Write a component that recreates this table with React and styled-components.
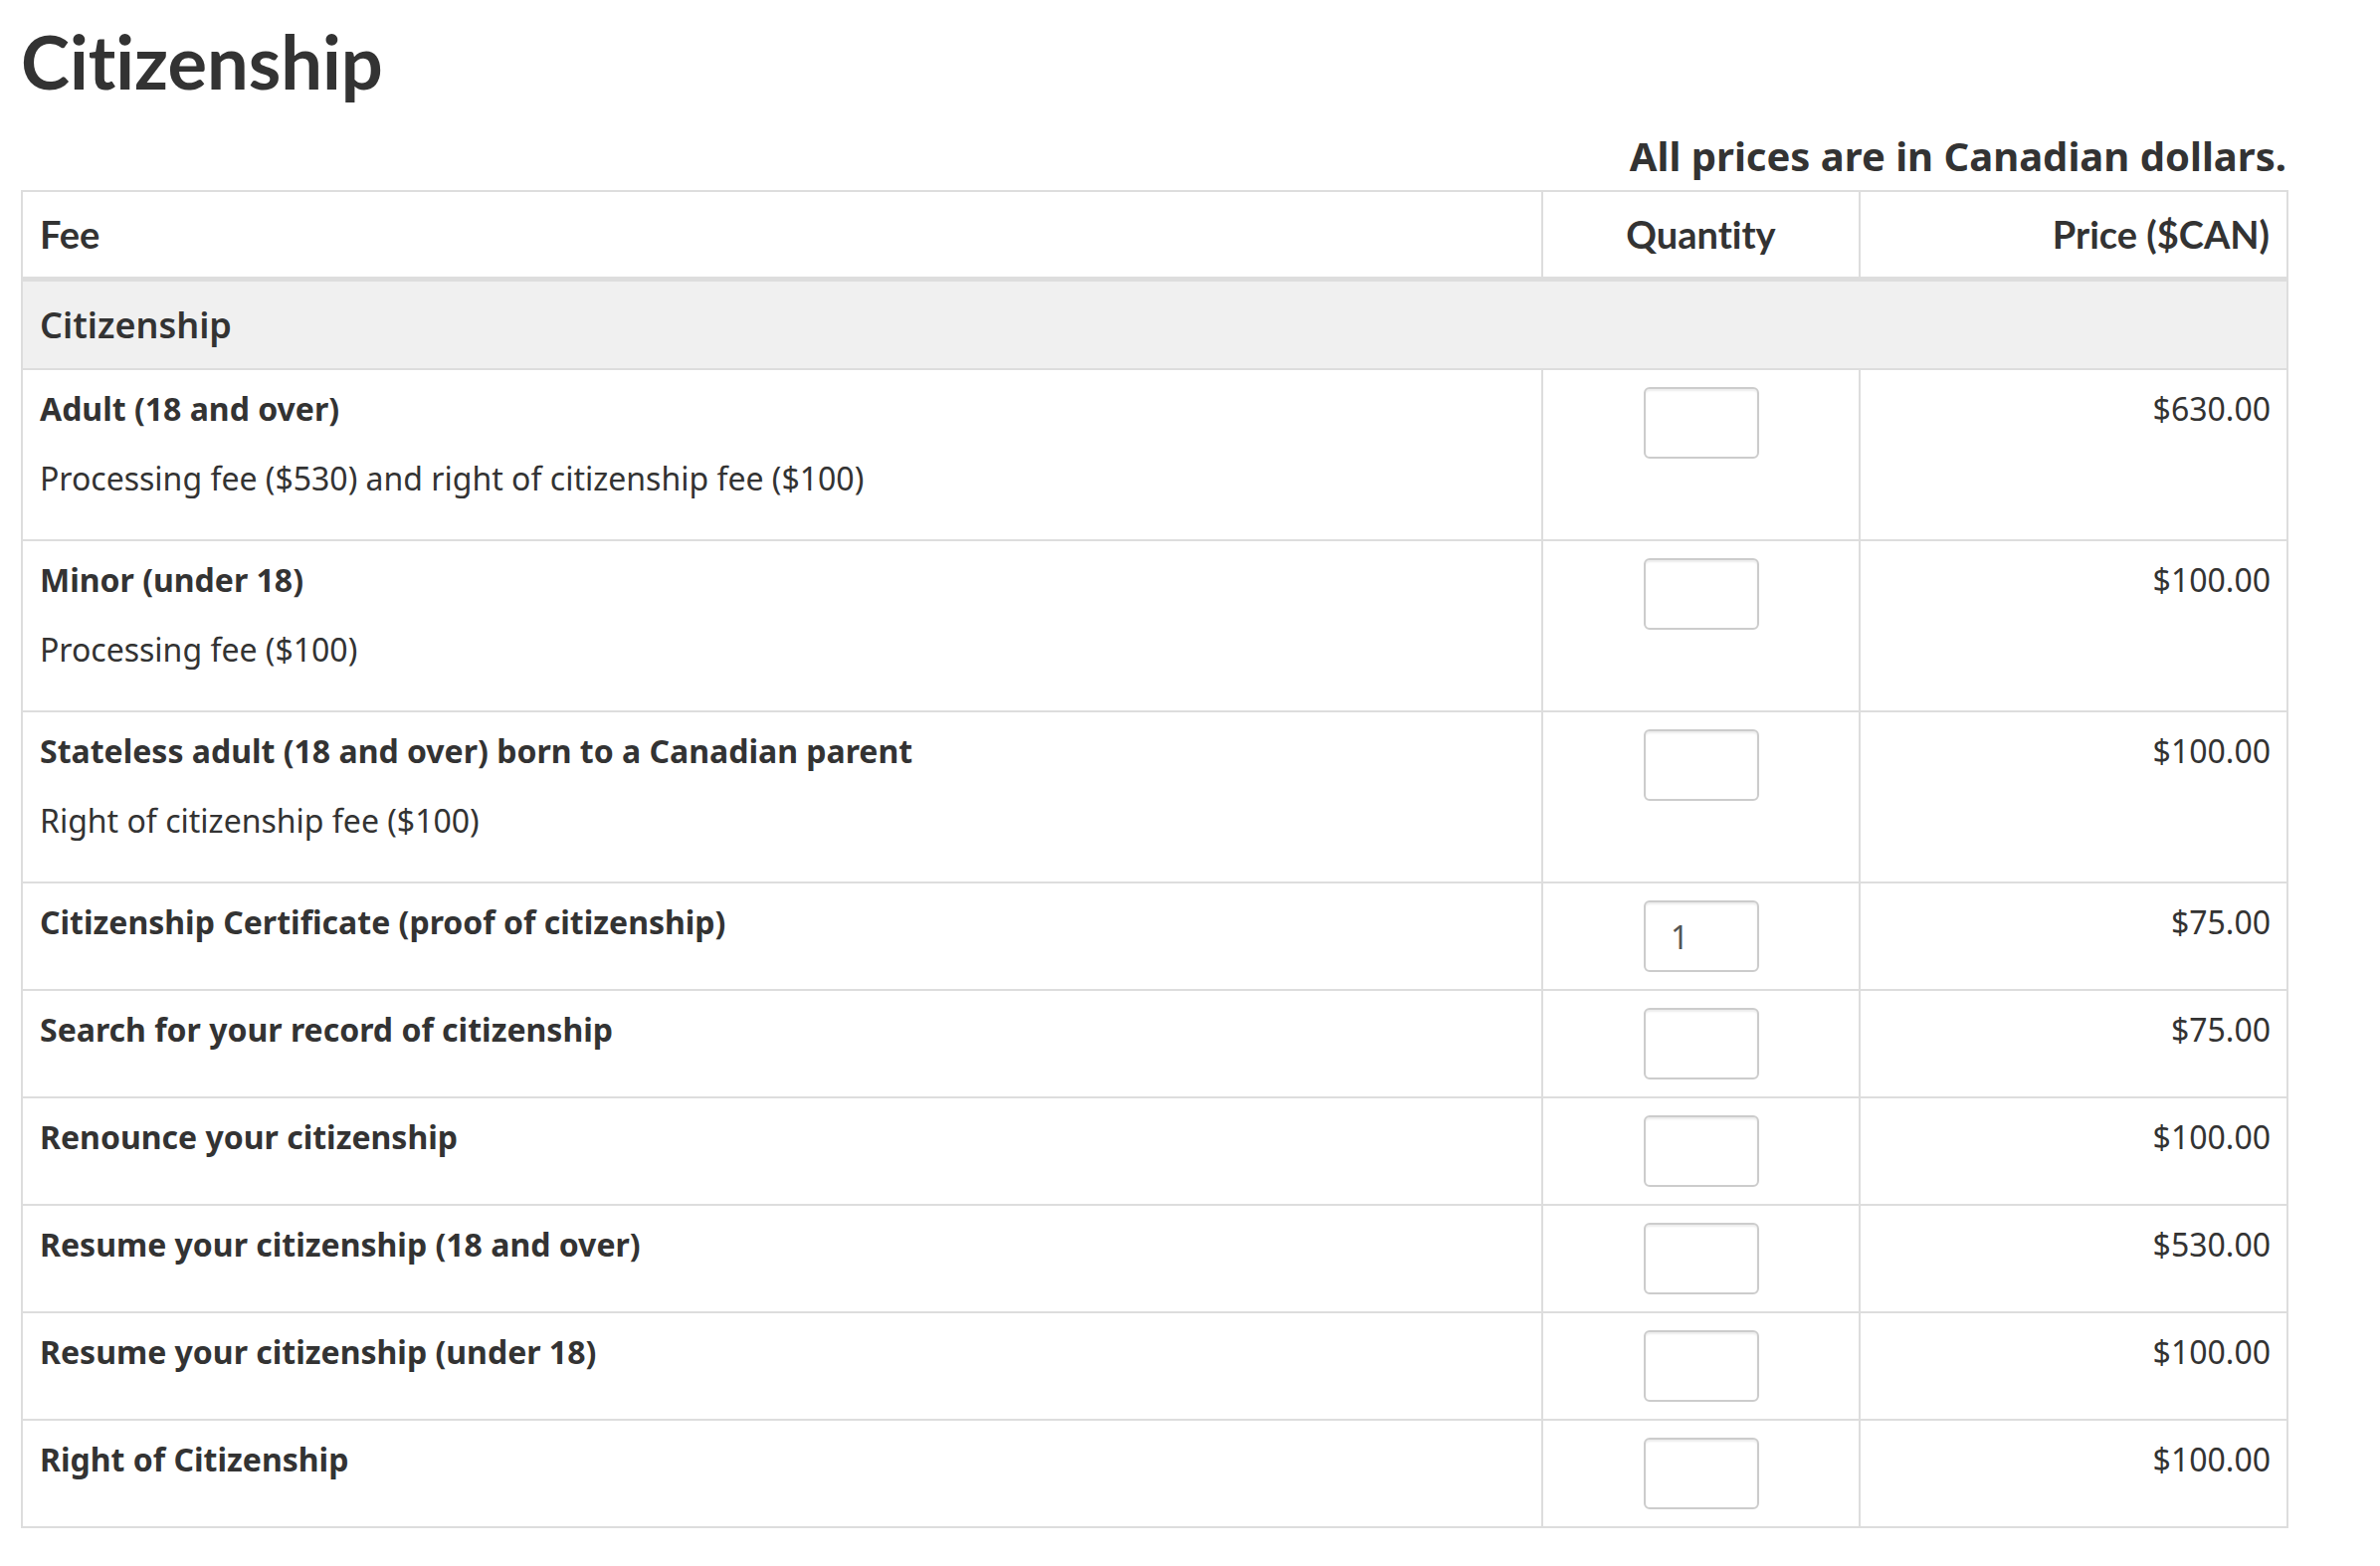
import React from "react";
import styled, { createGlobalStyle } from "styled-components";

const GlobalStyle = createGlobalStyle`
  html, body { margin: 0; padding: 0; background: #fff; }
  body {
    color: #333;
    font-family: "Noto Sans", "DejaVu Sans", sans-serif;
    font-variant-ligatures: none;
  }
  * { box-sizing: border-box; }
`;

const Page = styled.main`
  width: 2279px;
  margin: 0 0 0 21px;
  padding-top: 17px;
  padding-bottom: 40px;
`;

const Title = styled.h1`
  margin: 0;
  font-family: Lato, "Noto Sans", sans-serif;
  font-weight: 700;
  font-size: 74px;
  line-height: 89px;
  font-variant-ligatures: none;
  color: #333;
`;

const Note = styled.p`
  margin: 27px 2px 10px 0;
  text-align: right;
  font-weight: 700;
  font-size: 40px;
  line-height: 48px;
  color: #333;
`;

const FeeTable = styled.div`
  border: 2px solid #ddd;
  border-bottom: none;
`;

const Row = styled.div`
  display: grid;
  grid-template-columns: 1528px 319px 1fr;
  border-bottom: ${(p) => (p.$head ? "5px" : "2px")} solid #ddd;
`;

const GroupRow = styled.div`
  background: #f0f0f0;
  border-bottom: 2px solid #ddd;
  padding: 16px 17px;
  font-weight: 600;
  font-size: 36px;
  line-height: 55px;
  color: #333;
`;

const HeadCell = styled.div`
  padding: 17px 17px;
  font-family: Lato, "Noto Sans", sans-serif;
  font-weight: 700;
  font-size: 38px;
  line-height: 51px;
  font-variant-ligatures: none;
  color: #333;
  text-align: ${(p) => p.$align || "left"};
  border-right: ${(p) => (p.$last ? "none" : "2px solid #ddd")};
`;

const Cell = styled.div`
  padding: 17px 16px 17px 17px;
  border-right: ${(p) => (p.$last ? "none" : "2px solid #ddd")};
  text-align: ${(p) => p.$align || "left"};
`;

const QtyCell = styled(Cell)`
  display: flex;
  justify-content: center;
  align-items: flex-start;
`;

const Label = styled.div`
  font-weight: 700;
  font-size: 32px;
  line-height: 44px;
  color: #333;
`;

const Desc = styled.p`
  margin: 26px 0 22px;
  font-size: 32px;
  line-height: 44px;
  color: #333;
`;

const Price = styled.div`
  font-size: 32px;
  line-height: 44px;
  color: #333;
`;

const QtyInput = styled.input`
  width: 116px;
  height: 72px;
  border: 2px solid #ccc;
  border-radius: 6px;
  box-shadow: inset 0 2px 2px rgba(0, 0, 0, 0.075);
  padding: 0 25px;
  font-family: "Noto Sans", sans-serif;
  font-size: 32px;
  color: #555;
  background: #fff;
  outline: none;
`;

const fees = [
  {
    label: "Adult (18 and over)",
    desc: "Processing fee ($530) and right of citizenship fee ($100)",
    price: "$630.00",
  },
  { label: "Minor (under 18)", desc: "Processing fee ($100)", price: "$100.00" },
  {
    label: "Stateless adult (18 and over) born to a Canadian parent",
    desc: "Right of citizenship fee ($100)",
    price: "$100.00",
  },
  { label: "Citizenship Certificate (proof of citizenship)", price: "$75.00", qty: "1" },
  { label: "Search for your record of citizenship", price: "$75.00" },
  { label: "Renounce your citizenship", price: "$100.00" },
  { label: "Resume your citizenship (18 and over)", price: "$530.00" },
  { label: "Resume your citizenship (under 18)", price: "$100.00" },
  { label: "Right of Citizenship", price: "$100.00" },
];

export default function App() {
  return (
    <>
      <GlobalStyle />
      <Page>
        <Title>Citizenship</Title>
        <Note>All prices are in Canadian dollars.</Note>
        <FeeTable>
          <Row $head>
            <HeadCell>Fee</HeadCell>
            <HeadCell $align="center">Quantity</HeadCell>
            <HeadCell $align="right" $last>
              Price ($CAN)
            </HeadCell>
          </Row>
          <GroupRow>Citizenship</GroupRow>
          {fees.map((f) => (
            <Row key={f.label}>
              <Cell>
                <Label>{f.label}</Label>
                {f.desc && <Desc>{f.desc}</Desc>}
              </Cell>
              <QtyCell>
                <QtyInput type="text" defaultValue={f.qty || ""} aria-label={f.label} />
              </QtyCell>
              <Cell $align="right" $last>
                <Price>{f.price}</Price>
              </Cell>
            </Row>
          ))}
        </FeeTable>
      </Page>
    </>
  );
}
